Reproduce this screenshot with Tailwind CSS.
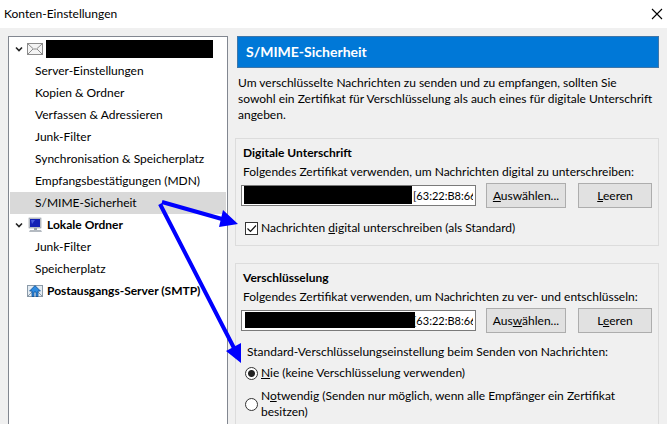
<!DOCTYPE html>
<html lang="de">

<head>
  <meta charset="UTF-8">
  <meta name="viewport" content="width=device-width, initial-scale=1.0">
  <title>Konten-Einstellungen</title>
  <script src="https://cdn.jsdelivr.net/npm/@tailwindcss/browser@4"></script>
</head>

<body class="relative flex flex-col min-h-screen bg-[#f0f0f0] text-black text-[12px] leading-4 font-[Lato,'Open_Sans',sans-serif] overflow-hidden">
  <!-- Title bar -->
  <header class="flex items-center justify-between h-7 pl-1 pr-1 bg-white">
    <h1>Konten-Einstellungen</h1>
    <button type="button" aria-label="Schließen" class="flex items-center justify-center w-3 h-3">
      <svg class="w-3 h-3" viewBox="0 0 12 12" fill="none" stroke="#000" stroke-width="1.1">
        <path d="M1 1l10 10M11 1L1 11" />
      </svg>
    </button>
  </header>

  <main class="flex flex-1 gap-2 pt-2 pl-2 pr-2">
    <!-- Account tree -->
    <nav class="w-[220px] shrink-0 border border-b-0 border-[#828790] bg-white p-px">
      <ul>
        <li class="flex items-center h-[22px] pl-[5px]">
          <svg class="w-2 h-2 mr-1" viewBox="0 0 8 8" fill="none" stroke="#222" stroke-width="1.6"><path d="M1 2.5l3 3 3-3" /></svg>
          <svg class="w-4 h-3 mr-[3px]" viewBox="0 0 16 12" fill="none">
            <rect x=".5" y=".5" width="15" height="11" fill="#f4f4f4" stroke="#8c8c8c" />
            <path d="M1 1l5.5 5h3L15 1M1 11l5-5M15 11l-5-5" stroke="#8c8c8c" />
          </svg>
          <span class="w-[167px] h-[18px] bg-black"></span>
        </li>
        <li class="flex items-center h-[22px] pl-[25px]"><a href="#server">Server-Einstellungen</a></li>
        <li class="flex items-center h-[22px] pl-[25px]"><a href="#kopien">Kopien &amp; Ordner</a></li>
        <li class="flex items-center h-[22px] pl-[25px]"><a href="#verfassen">Verfassen &amp; Adressieren</a></li>
        <li class="flex items-center h-[22px] pl-[25px]"><a href="#junk">Junk-Filter</a></li>
        <li class="flex items-center h-[22px] pl-[25px]"><a href="#sync">Synchronisation &amp; Speicherplatz</a></li>
        <li class="flex items-center h-[22px] pl-[25px]"><a href="#mdn">Empfangsbestätigungen (MDN)</a></li>
        <li class="flex items-center h-[22px] pl-[25px] bg-[#d9d9d9]"><a href="#smime">S/MIME-Sicherheit</a></li>
        <li class="flex items-center h-[22px] pl-[5px] font-bold">
          <svg class="w-2 h-2 mr-1" viewBox="0 0 8 8" fill="none" stroke="#222" stroke-width="1.6"><path d="M1 2.5l3 3 3-3" /></svg>
          <svg class="w-4 h-4 mr-1" viewBox="0 0 16 16">
            <rect x="2" y="1" width="12" height="10" fill="#c9cdd3" stroke="#8b929b" stroke-width=".6" />
            <rect x="3" y="2" width="10" height="8" fill="#1420b4" />
            <path d="M4 3h4L5 7z" fill="#4a5ce0" />
            <path d="M7 11h3v2H7z" fill="#9aa1a9" />
            <path d="M3 13h11l1 2H2z" fill="#b4bac1" />
          </svg>
          <a href="#lokal">Lokale Ordner</a>
        </li>
        <li class="flex items-center h-[22px] pl-[25px]"><a href="#lokal-junk">Junk-Filter</a></li>
        <li class="flex items-center h-[22px] pl-[25px]"><a href="#speicher">Speicherplatz</a></li>
        <li class="flex items-center h-[22px] pl-[17px] font-bold">
          <svg class="w-4 h-3 mr-1" viewBox="0 0 16 12">
            <rect x=".5" y=".5" width="15" height="11" fill="#e3ebf2" stroke="#8b9aa8" />
            <path d="M1 11l5-5M15 11l-5-5" stroke="#8b9aa8" />
            <path d="M8 .6L2.600 6H5v5.500h2V7h2v4.500h2V6h2.400z" fill="#2f8be0" stroke="#0b4f97" stroke-width=".8" />
          </svg>
          <a href="#smtp">Postausgangs-Server (SMTP)</a>
        </li>
      </ul>
    </nav>

    <!-- Settings pane -->
    <section class="flex flex-col flex-1 min-w-0">
      <h2 class="flex items-center h-8 ml-px px-2 border border-[#3f76a8] bg-[#0078d7] text-white text-[14px] font-bold">S/MIME-Sicherheit</h2>
      <p class="mt-[7px] ml-0.5 whitespace-nowrap">
        Um verschlüsselte Nachrichten zu senden und zu empfangen, sollten Sie<br>
        sowohl ein Zertifikat für Verschlüsselung als auch eines für digitale Unterschrift<br>
        angeben.
      </p>

      <section class="h-[108px] mt-[15px] -ml-px pl-[5px] pr-[6px] pt-[6px] border border-[#dcdcdc]">
        <h3 class="pl-0.5 font-bold">Digitale Unterschrift</h3>
        <label for="sign-cert" class="block mt-[3px] pl-0.5 whitespace-nowrap">Folgendes Zertifikat verwenden, um Nachrichten digital zu unterschreiben:</label>
        <div class="flex items-center mt-[3px]">
          <div class="relative flex-1 min-w-0">
            <input id="sign-cert" type="text" value="[63:22:B8:66:" class="block w-full h-[21px] pl-[171px] pr-0.5 border border-[#7a7a7a] bg-white text-[11px]">
            <span class="absolute left-[3px] top-px w-[168px] h-[18px] bg-black"></span>
          </div>
          <button type="button" class="w-20 h-[25px] ml-2.5 border border-[#adadad] bg-[#e1e1e1]"><u>A</u>uswählen...</button>
          <button type="button" class="w-[74px] h-[25px] ml-3 border border-[#adadad] bg-[#e1e1e1]"><u>L</u>eeren</button>
        </div>
        <div class="flex items-center mt-3 pl-1 gap-[3px]">
          <span class="relative w-[13px] h-[13px]">
            <input id="sign" type="checkbox" checked class="block appearance-none w-[13px] h-[13px] border border-[#333] bg-white">
            <svg class="absolute inset-0 w-[13px] h-[13px] pointer-events-none" viewBox="0 0 13 13" fill="none" stroke="#111" stroke-width="1.2"><path d="M2.500 6.500l3 3 5.500-6" /></svg>
          </span>
          <label for="sign">Nachrichten <u>d</u>igital unterschreiben (als Standard)</label>
        </div>
      </section>

      <section class="flex-1 mt-[17px] -ml-px pl-[5px] pr-[6px] pt-[6px] border border-b-0 border-[#dcdcdc]">
        <h3 class="pl-0.5 font-bold">Verschlüsselung</h3>
        <label for="enc-cert" class="block mt-[3px] pl-0.5 whitespace-nowrap">Folgendes Zertifikat verwenden, um Nachrichten zu ver- und entschlüsseln:</label>
        <div class="flex items-center mt-[3px]">
          <div class="relative flex-1 min-w-0">
            <input id="enc-cert" type="text" value="[63:22:B8:66:" class="block w-full h-[21px] pl-[171px] pr-0.5 border border-[#7a7a7a] bg-white text-[11px]">
            <span class="absolute left-1 top-0.5 w-[170px] h-4 bg-black"></span>
          </div>
          <button type="button" class="w-20 h-[25px] ml-2.5 border border-[#adadad] bg-[#e1e1e1]">Aus<u>w</u>ählen...</button>
          <button type="button" class="w-[74px] h-[25px] ml-3 border border-[#adadad] bg-[#e1e1e1]">L<u>e</u>eren</button>
        </div>
        <fieldset class="mt-[11px]">
          <legend class="pl-1.5 whitespace-nowrap">Standard-Verschlüsselungseinstellung beim Senden von Nachrichten:</legend>
          <div class="flex items-center mt-[5px] pl-1 gap-[3px]">
            <input id="never" name="encrypt" type="radio" checked class="appearance-none shrink-0 w-[13px] h-[13px] rounded-full border border-[#333] bg-white checked:bg-[radial-gradient(circle,#222_3px,#fff_4px)]">
            <label for="never"><u>N</u>ie (keine Verschlüsselung verwenden)</label>
          </div>
          <div class="flex items-center mt-[7px] pl-1 gap-[3px]">
            <input id="required" name="encrypt" type="radio" class="appearance-none shrink-0 w-[13px] h-[13px] rounded-full border border-[#333] bg-white">
            <label for="required" class="whitespace-nowrap">N<u>o</u>twendig (Senden nur möglich, wenn alle Empfänger ein Zertifikat<br>besitzen)</label>
          </div>
        </fieldset>
      </section>
    </section>
  </main>

  <!-- Arrows drawn over the dialog -->
  <svg class="absolute left-0 top-0 w-[260px] h-[380px] pointer-events-none" viewBox="0 0 260 380" fill="#0000fe" stroke="#0000fe">
    <path d="M162 202L222 219M160 204L234 348" fill="none" stroke-width="4" />
    <path d="M223 210l15 14-19 3zM241 343l0 20-15-12z" stroke="none" />
  </svg>
</body>

</html>
